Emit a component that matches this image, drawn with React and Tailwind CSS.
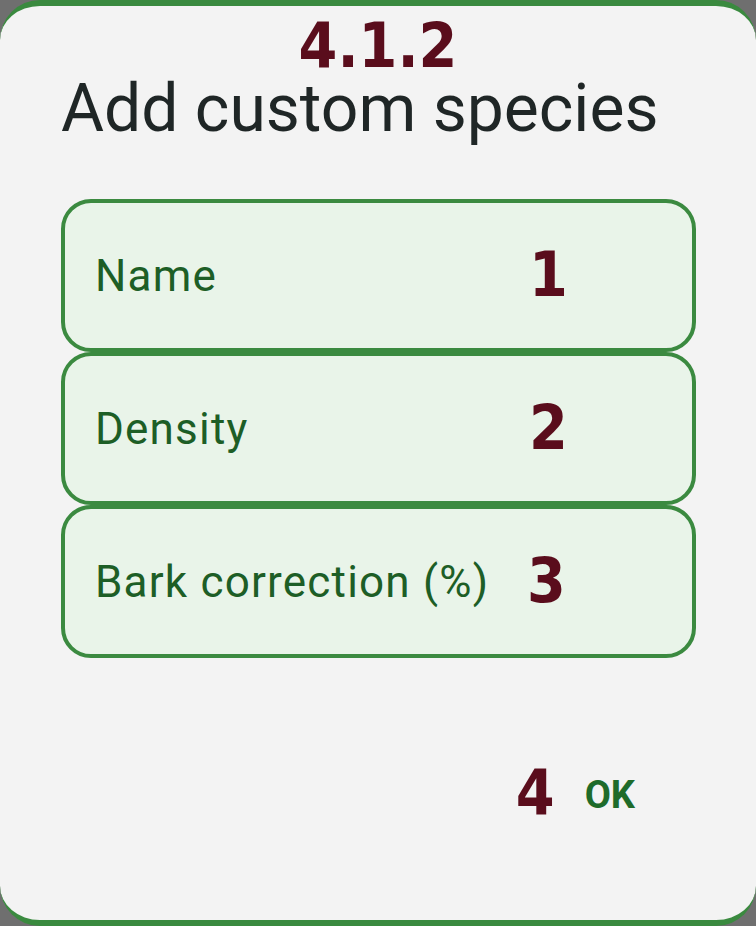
const fields = [
  { label: 'Name', mark: '1', left: 'left-[464px]' },
  { label: 'Density', mark: '2', left: 'left-[464px]' },
  { label: 'Bark correction (%)', mark: '3', left: 'left-[462px]' }
]

const mark = "font-['DejaVu_Sans_Condensed','DejaVu_Sans',sans-serif] font-bold text-[#5a0d1c] text-[62px] leading-none"

const App = () => {
  return (
    <div className="w-[756px] h-[926px] overflow-hidden bg-[#6f6f6f]">
      <div className="relative h-full flex flex-col bg-[#f3f3f3] border-y-[6px] border-[#3a8a3f] rounded-[40px] font-['Roboto',sans-serif]">
        {/* step number */}
        <div className={`absolute top-[9px] left-0 right-0 text-center ${mark}`}>4.1.2</div>

        <h1 className="mt-[73px] pl-[61px] text-[66px] leading-[60px] text-[#1f2626] font-normal">
          Add custom species
        </h1>

        {/* Fields */}
        <div className="mt-[60px] ml-[61px] w-[635px] flex flex-col">
          {fields.map((f) => (
            <div
              key={f.label}
              className="relative h-[153px] flex items-center pl-[30px] bg-[#e9f4e9] border-4 border-[#3b8a40] rounded-[30px]"
            >
              <span className="text-[44px] text-[#1d5e26] tracking-[1.2px]">{f.label}</span>
              <span className={`absolute top-[41px] ${f.left} ${mark}`}>{f.mark}</span>
            </div>
          ))}
        </div>

        {/* Actions */}
        <div className="mt-[104px] flex items-center justify-end pr-[121px] gap-[30px]">
          <span className={mark}>4</span>
          <button className="text-[38px] font-bold text-[#1e6b2a] leading-none pt-[4px]">OK</button>
        </div>
      </div>
    </div>
  )
}

export default App
